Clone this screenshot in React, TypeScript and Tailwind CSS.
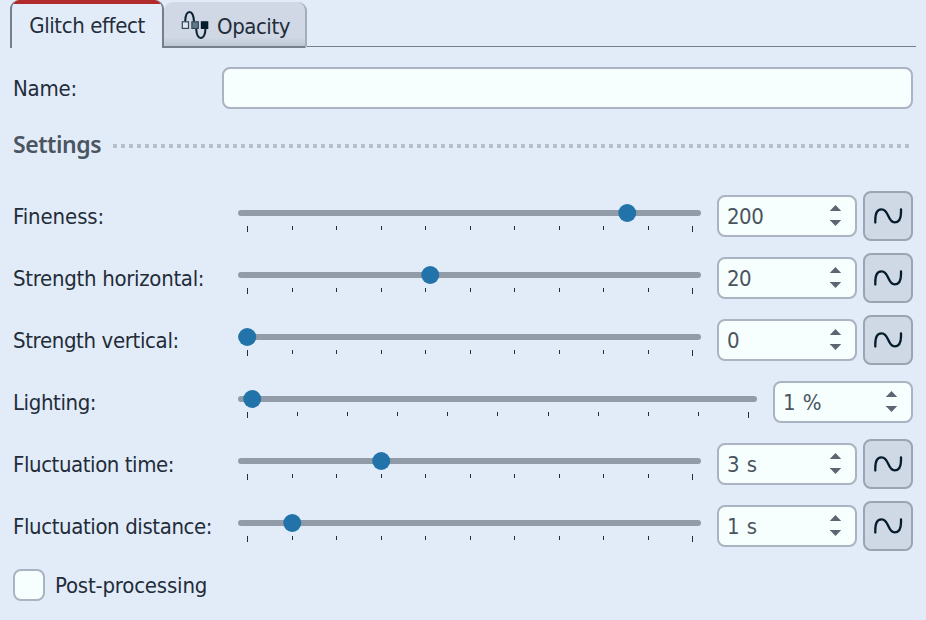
import { useState } from "react"

type Setting = {
    label: string;
    value: string;
    position: number;
    keyframes: boolean;
    labelStyle: string;
}

const settings: Setting[] = [
    { label: "Fineness:", value: "200", position: 389, keyframes: true, labelStyle: "tracking-[-0.1px]" },
    { label: "Strength horizontal:", value: "20", position: 192, keyframes: true, labelStyle: "tracking-[-0.3px]" },
    { label: "Strength vertical:", value: "0", position: 9, keyframes: true, labelStyle: "tracking-[-0.36px]" },
    { label: "Lighting:", value: "1 %", position: 14, keyframes: false, labelStyle: "tracking-[-0.4px]" },
    { label: "Fluctuation time:", value: "3 s", position: 143, keyframes: true, labelStyle: "tracking-[-0.43px]" },
    { label: "Fluctuation distance:", value: "1 s", position: 54, keyframes: true, labelStyle: "tracking-[-0.4px]" },
]

const ticks = Array.from({ length: 11 }, (_, i) => i)

const OpacityIcon = () => (
    <svg width="28" height="30" viewBox="0 0 28 30" fill="none">
        <path d="M4.2 11.5C4.4 5 5.6 2 8.5 2C11.6 2 12.6 5.5 13 11.5M15.2 19C15.6 25 16.8 28 19.8 28C22.8 28 24.2 25 24.5 18.5" stroke="#0b2233" strokeWidth="2.1" />
        <rect x="1.3" y="11.8" width="6.2" height="6.6" fill="#dde6ed" stroke="#33485a" strokeWidth="1.2" />
        <rect x="10.9" y="11.8" width="6.4" height="6.6" fill="#64788a" stroke="#33485a" strokeWidth="1.2" />
        <rect x="19.8" y="11.2" width="7.5" height="7.8" fill="#041c2c" />
    </svg>
)

const WaveIcon = () => (
    <svg width="30" height="20" viewBox="0 0 30 20" fill="none">
        <path d="M2.3 16.6V14.5C2.3 7 4 3.3 8.7 3.3C12 3.3 13.6 6 15.2 9.8C17 14 18.4 16.4 21.6 16.4C26 16.4 28 12.5 28 6.5V3.3" stroke="#041c2c" strokeWidth="2.3" strokeLinecap="round" />
    </svg>
)

const Slider = ({ position }: { position: number }) => (
    <div className="relative h-[50px] flex-1 pt-[19px]">
        <div className="h-[6px] rounded-full bg-[#929ca9]" />
        <div className="mt-[10px] ml-[9px] mr-[8px] flex justify-between">
            {ticks.map((tick) => (
                <div key={tick} className={tick % 10 === 0 ? "h-[6px] w-px bg-[#232c38]" : "h-[4px] w-px bg-[#232c38]"} />
            ))}
        </div>
        <div
            className="absolute top-[13px] size-[17.5px] -translate-x-1/2 rounded-full bg-[#2273a9]"
            style={{ left: position }}
        />
    </div>
)

const SpinBox = ({ value }: { value: string }) => (
    <div className="ml-4 flex h-[42px] w-[140px] items-center justify-between rounded-[8px] border-2 border-[#aab3c1] bg-[#f7fffe] pl-2 pr-[13px] text-[#4a545f]">
        <span className="pt-[2px] tracking-[-0.5px] [word-spacing:2px]">{value}</span>
        <svg width="12" height="22" viewBox="0 0 12 22" fill="#5c6672">
            <path d="M5.5 0L11.2 6H-0.2Z" />
            <path d="M5.5 21L11.2 15H-0.2Z" />
        </svg>
    </div>
)

const App = () => {
    const [checked, setChecked] = useState(false);

    return (
        <div className="h-[620px] w-[926px] overflow-hidden bg-[#e2ecf9] font-['DejaVu_Sans_Condensed','DejaVu_Sans',sans-serif] [font-stretch:condensed] text-[22px] leading-[30px] text-[#232c38]">
            <div className="flex h-[48px] pl-[10px] pr-[10px]">
                <div className="relative flex w-[154px] justify-center overflow-hidden rounded-t-[9px] border-x-2 border-[#747f8c] pt-[11px]">
                    <div className="absolute inset-x-0 top-0 h-[4px] bg-[#b12a2c]" />
                    <span className="whitespace-nowrap tracking-[-0.4px]">Glitch effect</span>
                </div>
                <div className="mt-[2px] flex w-[143px] rounded-t-[9px] rounded-br-[3px] border-r-2 border-b-2 border-r-[#a3aebc] border-b-[#747f8c] bg-linear-to-b from-[#cfd8e4] from-80% to-[#bdc7d4] pl-[17px]">
                    <div className="pt-[8px]"><OpacityIcon /></div>
                    <span className="pl-[8px] pt-[10px] tracking-[-0.45px]">Opacity</span>
                </div>
                <div className="mb-px flex-1 border-b border-[#747f8c]" />
            </div>

            <div className="mt-[19px] flex items-center pl-[13px] pr-[13px]">
                <label htmlFor="name" className="w-[209px] pt-[2px] tracking-[-0.2px]">Name:</label>
                <input id="name" className="h-[42px] flex-1 rounded-[8px] border-2 border-[#aab3c1] bg-[#f7fffe] px-2 outline-none" />
            </div>

            <div className="mt-[21px] flex h-[30px] items-center pl-[13px] pr-[17px]">
                <h2 className="w-[100px] pb-[2px] font-['Noto_Sans',sans-serif] text-[23px] font-semibold tracking-[-0.45px] text-[#4a5560]">Settings</h2>
                <div className="mt-[2px] h-[4px] flex-1 bg-[repeating-linear-gradient(90deg,#b6c0cd_0px,#b6c0cd_4px,transparent_4px,transparent_8px)]" />
            </div>

            <div className="mt-[31px] flex flex-col gap-3 pl-[13px] pr-[13px]">
                {settings.map((item) => (
                    <div key={item.label} className="flex h-[50px] items-center">
                        <span className={`w-[225px] pt-[2px] whitespace-nowrap ${item.labelStyle}`}>{item.label}</span>
                        <Slider position={item.position} />
                        <SpinBox value={item.value} />
                        {item.keyframes && (
                            <button className="ml-[6px] flex size-[50px] items-center justify-center rounded-[8px] border-2 border-[#9aa4b2] bg-[#cfd8e5]">
                                <WaveIcon />
                            </button>
                        )}
                    </div>
                ))}
            </div>

            <label className="mt-[18px] ml-[13px] flex items-center">
                <input
                    type="checkbox"
                    checked={checked}
                    onChange={() => setChecked(!checked)}
                    className="size-8 appearance-none rounded-[8px] border-2 border-[#aab3c1] bg-[#f7fffe] checked:bg-[#2273a9]"
                />
                <span className="pl-[10px] pt-[2px] tracking-[-0.2px]">Post-processing</span>
            </label>
        </div>
    )
}

export default App
